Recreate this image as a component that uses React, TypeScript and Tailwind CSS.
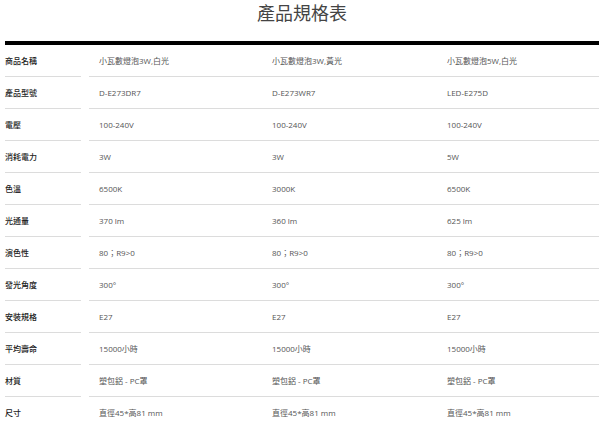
const rows: [string, string, string, string][] = [
  ["商品名稱", "小瓦數燈泡3W,白光", "小瓦數燈泡3W,黃光", "小瓦數燈泡5W,白光"],
  ["產品型號", "D-E273DR7", "D-E273WR7", "LED-E275D"],
  ["電壓", "100-240V", "100-240V", "100-240V"],
  ["消耗電力", "3W", "3W", "5W"],
  ["色溫", "6500K", "3000K", "6500K"],
  ["光通量", "370 lm", "360 lm", "625 lm"],
  ["演色性", "80；R9>0", "80；R9>0", "80；R9>0"],
  ["發光角度", "300°", "300°", "300°"],
  ["安裝規格", "E27", "E27", "E27"],
  ["平均壽命", "15000小時", "15000小時", "15000小時"],
  ["材質", "塑包鋁 - PC罩", "塑包鋁 - PC罩", "塑包鋁 - PC罩"],
  ["尺寸", "直徑45*高81 mm", "直徑45*高81 mm", "直徑45*高81 mm"],
];

export default function App() {
  return (
    <div
      className="w-[600px] h-[426px] overflow-hidden bg-white pl-[5px] pr-[1px]"
      style={{ fontFamily: '"Open Sans", "Noto Sans CJK TC", sans-serif' }}
    >
      {/* Title */}
      <div className="h-[41px] text-center text-[18px] leading-[26px] text-[#444]">產品規格表</div>
      <div className="h-[4px] bg-black" />

      {/* Spec rows */}
      {rows.map(([label, a, b, c]) => (
        <div key={label} className="grid grid-cols-[84px_174px_175px_1fr] h-[32px] text-[8px]">
          <div className="mr-2 flex items-center border-b border-[#dcdcdc] font-medium text-[#222]">{label}</div>
          <div className="flex items-center border-b border-[#dcdcdc] pl-[10px] text-[#555]">{a}</div>
          <div className="flex items-center border-b border-[#dcdcdc] pl-[9px] text-[#555]">{b}</div>
          <div className="flex items-center border-b border-[#dcdcdc] pl-[9px] text-[#555]">{c}</div>
        </div>
      ))}
    </div>
  );
}
